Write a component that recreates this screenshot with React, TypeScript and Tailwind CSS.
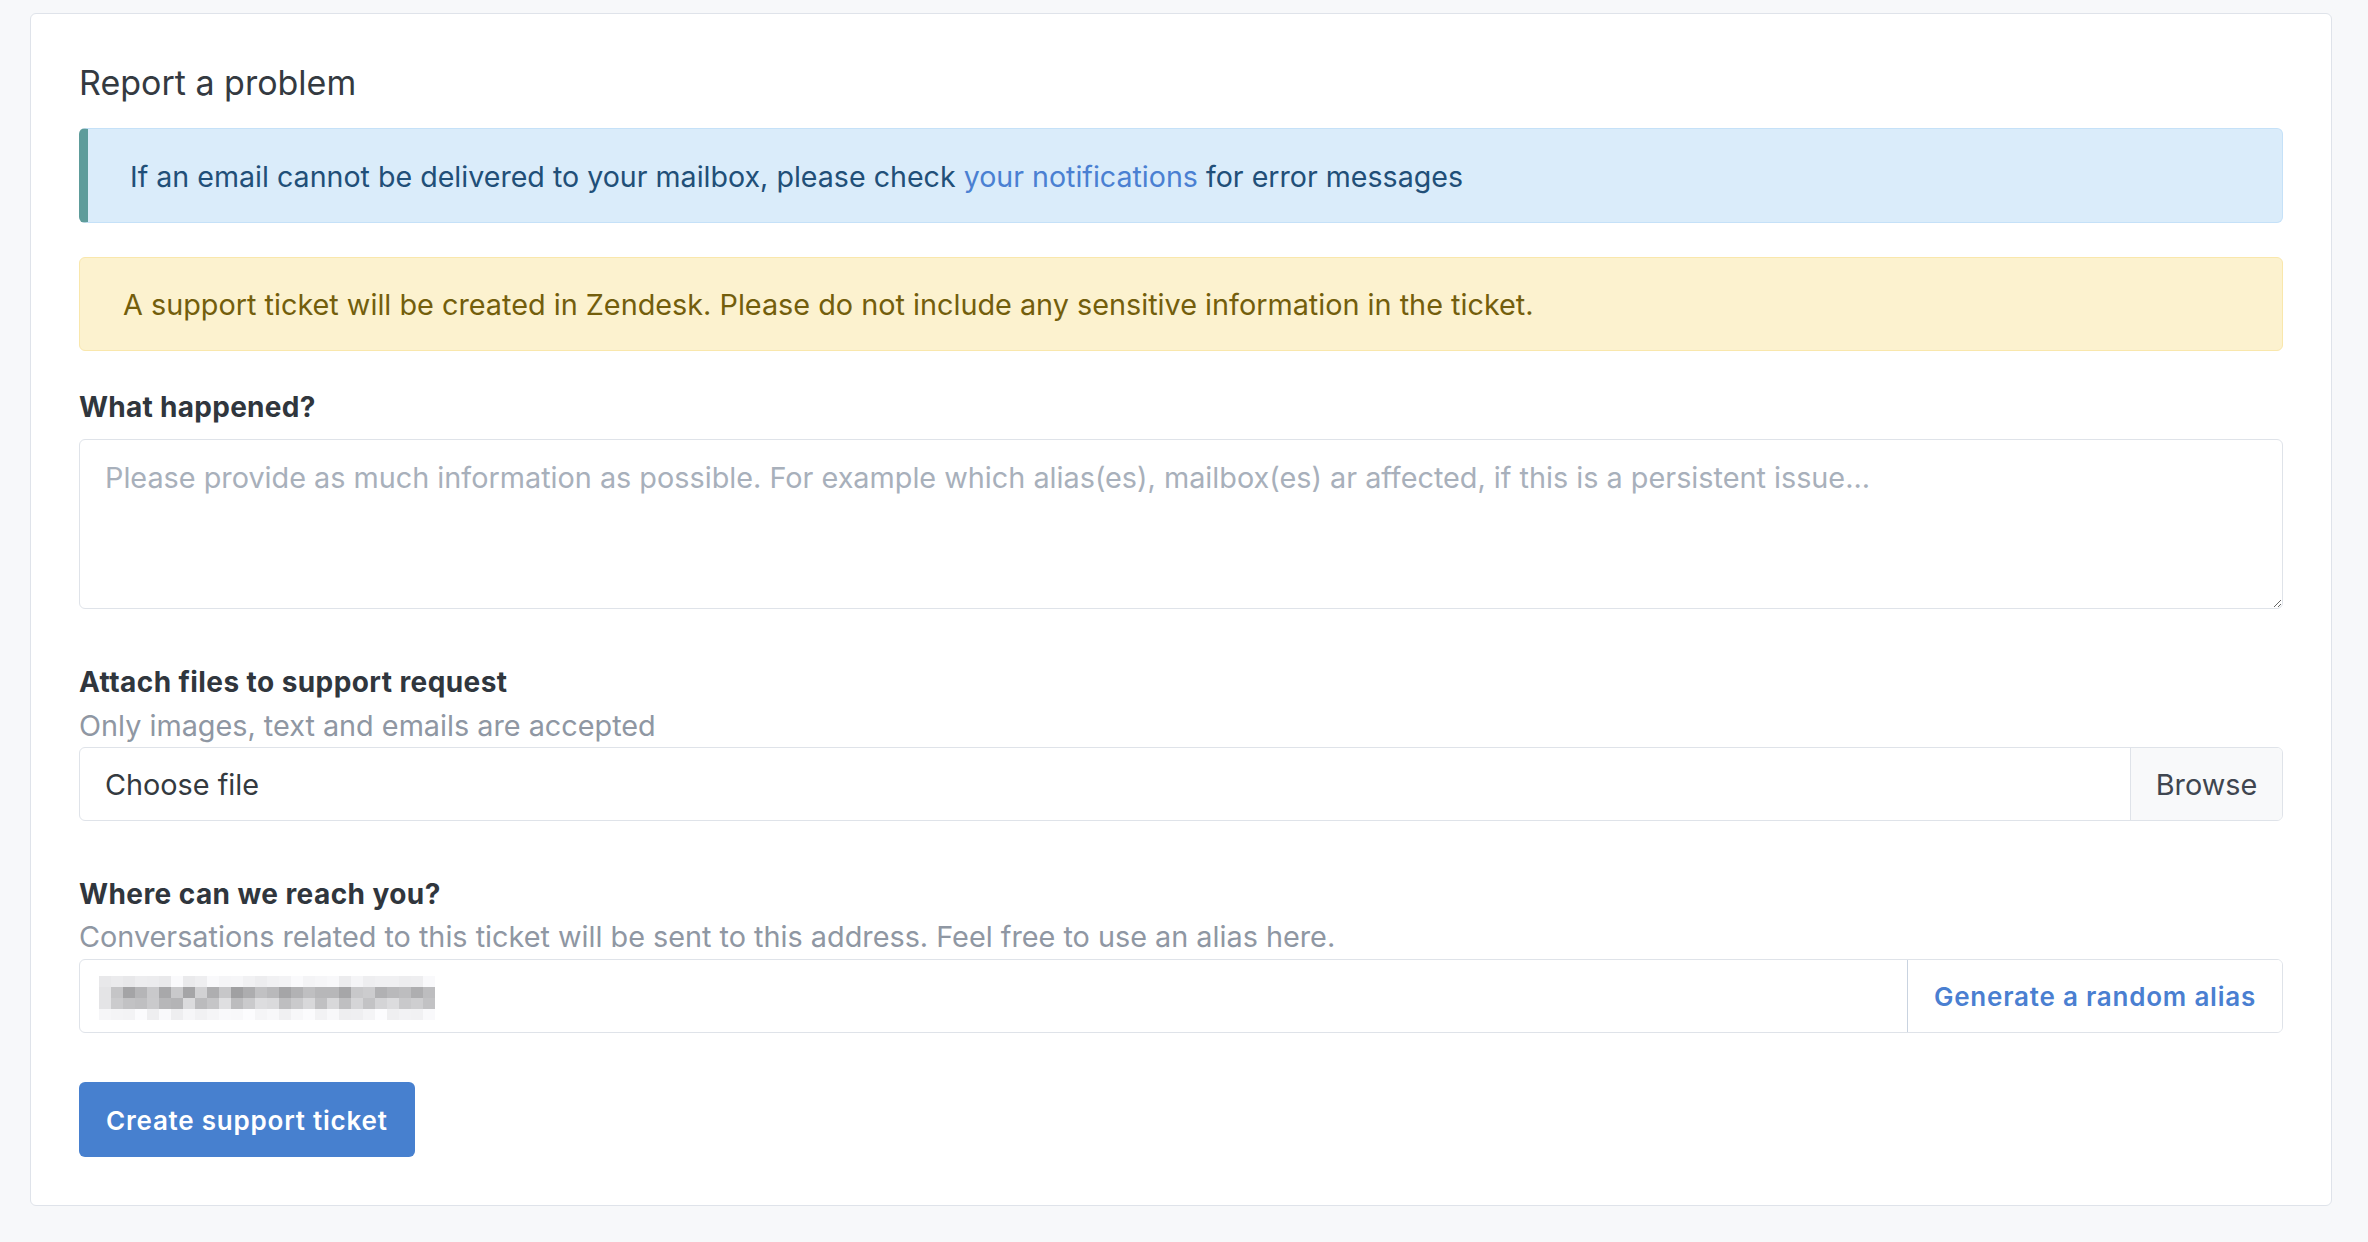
import React from "react";

const COLS = 28;
const ROWS = 4;

function rand(r: number, c: number): number {
  const v = Math.sin(r * 12.9898 + c * 78.233) * 43758.5453;
  return v - Math.floor(v);
}

function grayFor(r: number, c: number): string {
  const v = rand(r, c);
  let g = 230;
  if (r === 0) g = 232 + Math.round(v * 18);
  else if (r === 1) g = 160 + Math.round(v * 50);
  else if (r === 2) g = 178 + Math.round(v * 45);
  else g = 238 + Math.round(v * 14);
  if (c === 0) g = Math.max(g, 228);
  return `rgb(${g},${g},${g + 2})`;
}

function Mosaic() {
  const rows = [];
  for (let r = 0; r < ROWS; r++) {
    const cells = [];
    for (let c = 0; c < COLS; c++) {
      cells.push(
        <div key={c} className="w-[12px] h-[11px]" style={{ background: grayFor(r, c) }} />
      );
    }
    rows.push(
      <div key={r} className="flex">
        {cells}
      </div>
    );
  }
  return <div className="flex flex-col">{rows}</div>;
}

export default function App() {
  return (
    <div className="min-h-screen bg-[#f7f8fa] pt-[13px] pl-[30px] pr-[36px] font-[Inter,'Noto_Sans',sans-serif] text-[28.8px] leading-[42px]">
      <div className="bg-white border border-[#dfe3ea] rounded-[6px] p-[48px]">
        <h2 className="text-[34px] leading-[42px] font-normal text-[#343a41] mb-[24px]">
          Report a problem
        </h2>

        <div className="h-[95px] flex items-center rounded-[6px] border border-[#c5e1f8] border-l-[9px] border-l-[#5e9c9b] bg-[#daecfa] pl-[42px] pt-[2px] text-[#214f78]">
          <p className="text-[28.6px]">
            If an email cannot be delivered to your mailbox, please check{" "}
            <a className="text-[#4a80d2]" href="#">
              your notifications
            </a>{" "}
            for error messages
          </p>
        </div>

        <div className="mt-[34px] h-[94px] flex items-center rounded-[6px] border border-[#f9e7ac] bg-[#fcf2cf] pl-[43px] pt-[2px] text-[#735e0c]">
          <p>
            A support ticket will be created in Zendesk. Please do not include any sensitive
            information in the ticket.
          </p>
        </div>

        <div className="mt-[35px] text-[28px] font-bold tracking-[0.01em] text-[#30363d]">What happened?</div>
        <textarea
          className="mt-[11px] block w-full h-[170px] border border-[#dfe3e9] rounded-[6px] px-[25px] pt-[17px] text-[#343a40] placeholder:text-[#a8b0bb] outline-none"
          placeholder="Please provide as much information as possible. For example which alias(es), mailbox(es) ar affected, if this is a persistent issue..."
        />

        <div className="mt-[52px] text-[28px] font-bold tracking-[0.015em] text-[#30363d]">Attach files to support request</div>
        <div className="mt-[2px] text-[#8f97a3]">Only images, text and emails are accepted</div>
        <div className="flex h-[74px] border border-[#dfe3e9] rounded-[6px] overflow-hidden">
          <div className="flex-1 flex items-center pl-[25px] pt-[2px] text-[#343a40]">Choose file</div>
          <div className="w-[152px] flex items-center justify-center border-l border-[#dfe3e9] bg-[#f8f9fa] pt-[2px] text-[#3f4650]">
            Browse
          </div>
        </div>

        <div className="mt-[52px] text-[28px] font-bold tracking-[0.015em] text-[#30363d]">Where can we reach you?</div>
        <div className="mt-[1px] text-[#8f97a3]">
          Conversations related to this ticket will be sent to this address. Feel free to use an
          alias here.
        </div>
        <div className="mt-[1px] flex h-[74px] border border-[#dfe3e9] rounded-[6px] overflow-hidden">
          <div className="flex-1 flex items-center pl-[19px] pt-[4px]">
            <Mosaic />
          </div>
          <div className="w-[375px] flex items-center justify-center border-l border-[#c9d3e0] bg-white pt-[2px] text-[26px] font-semibold tracking-[0.03em] text-[#4a7fd1]">
            Generate a random alias
          </div>
        </div>

        <button className="mt-[49px] h-[75px] px-[27px] pt-[2px] rounded-[6px] bg-[#4780cf] text-white text-[26px] font-semibold tracking-[0.03em]">
          Create support ticket
        </button>
      </div>
    </div>
  );
}
